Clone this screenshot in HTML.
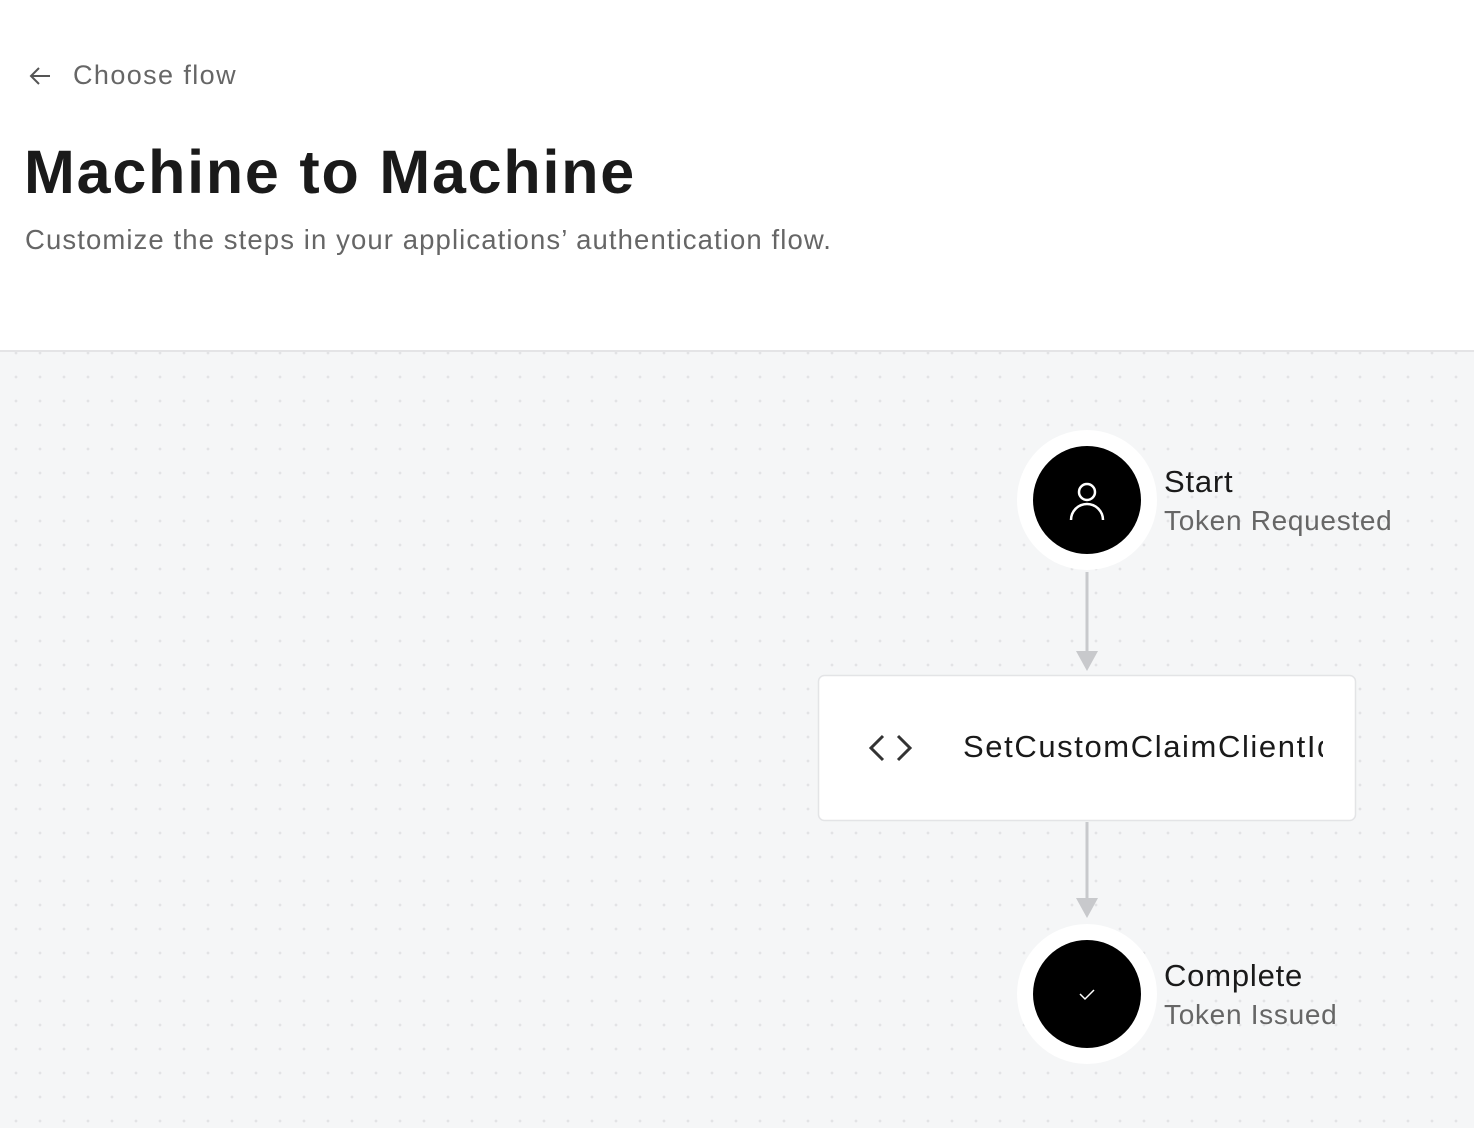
<!DOCTYPE html>
<html><head><meta charset="utf-8"><style>
html,body{margin:0;padding:0;width:1474px;height:1126px;overflow:hidden;background:#fff;font-family:"Liberation Sans",sans-serif;}
.top{position:absolute;left:0;top:0;width:1474px;height:350px;background:#fff;}
.canvas{position:absolute;left:0;top:350px;width:1474px;height:776px;background-color:#f5f6f7;border-top:2px solid #e4e4e6;
background-image:radial-gradient(circle,#e2e3e5 1.2px,transparent 1.6px);background-size:24px 24px;background-position:4px 13px;}
.abs{position:absolute;white-space:nowrap;}
</style></head><body>
<div class="top">
<svg class="abs" style="left:28px;top:65px" width="24" height="22" viewBox="0 0 24 22"><path d="M22 11H3M11 3L3 11l8 8" fill="none" stroke="#555" stroke-width="2"/></svg>
<div class="abs" style="left:73px;top:60px;font-size:27px;color:#666;letter-spacing:1.4px">Choose flow</div>
<div class="abs" style="left:24px;top:137px;font-size:61px;font-weight:bold;color:#1a1a1a;letter-spacing:1.8px">Machine to Machine</div>
<div class="abs" style="left:25px;top:224px;font-size:27.5px;color:#666;letter-spacing:1.1px">Customize the steps in your applications’ authentication flow.</div>
</div>
<div class="canvas"></div>
<svg class="abs" style="left:0;top:0" width="1474" height="1126">
<line x1="1087" y1="572" x2="1087" y2="655" stroke="#c8c9cc" stroke-width="3"/>
<path d="M1076 651h22l-11 20z" fill="#c8c9cc"/>
<line x1="1087" y1="822" x2="1087" y2="902" stroke="#c8c9cc" stroke-width="3"/>
<path d="M1076 898h22l-11 20z" fill="#c8c9cc"/>
<circle cx="1087" cy="500" r="70" fill="#fff"/>
<circle cx="1087" cy="500" r="54" fill="#000"/>
<circle cx="1087" cy="492" r="8" fill="none" stroke="#fff" stroke-width="2.5"/>
<path d="M1071 520a16 16 0 0 1 32 0" fill="none" stroke="#fff" stroke-width="2.5"/>
<circle cx="1087" cy="994" r="70" fill="#fff"/>
<circle cx="1087" cy="994" r="54" fill="#000"/>
<path d="M1080 994l5 5 9-9" fill="none" stroke="#fff" stroke-width="1.5"/>
<rect x="818.5" y="675.5" width="537" height="145" rx="6" fill="#fff" stroke="#e3e4e6" stroke-width="1.5"/>
<path d="M883 736l-12 12 12 12M898 736l12 12-12 12" fill="none" stroke="#333" stroke-width="3"/>
</svg>
<div class="abs" style="left:963px;top:729px;width:360px;overflow:hidden;font-size:31px;color:#1a1a1a;letter-spacing:1.6px">SetCustomClaimClientId</div>
<div class="abs" style="left:1164px;top:464px;font-size:31px;color:#1a1a1a;letter-spacing:0.8px">Start</div>
<div class="abs" style="left:1164px;top:505px;font-size:28px;color:#666;letter-spacing:0.7px">Token Requested</div>
<div class="abs" style="left:1164px;top:958px;font-size:31px;color:#1a1a1a;letter-spacing:0.8px">Complete</div>
<div class="abs" style="left:1164px;top:999px;font-size:28px;color:#666;letter-spacing:0.7px">Token Issued</div>
</body></html>
